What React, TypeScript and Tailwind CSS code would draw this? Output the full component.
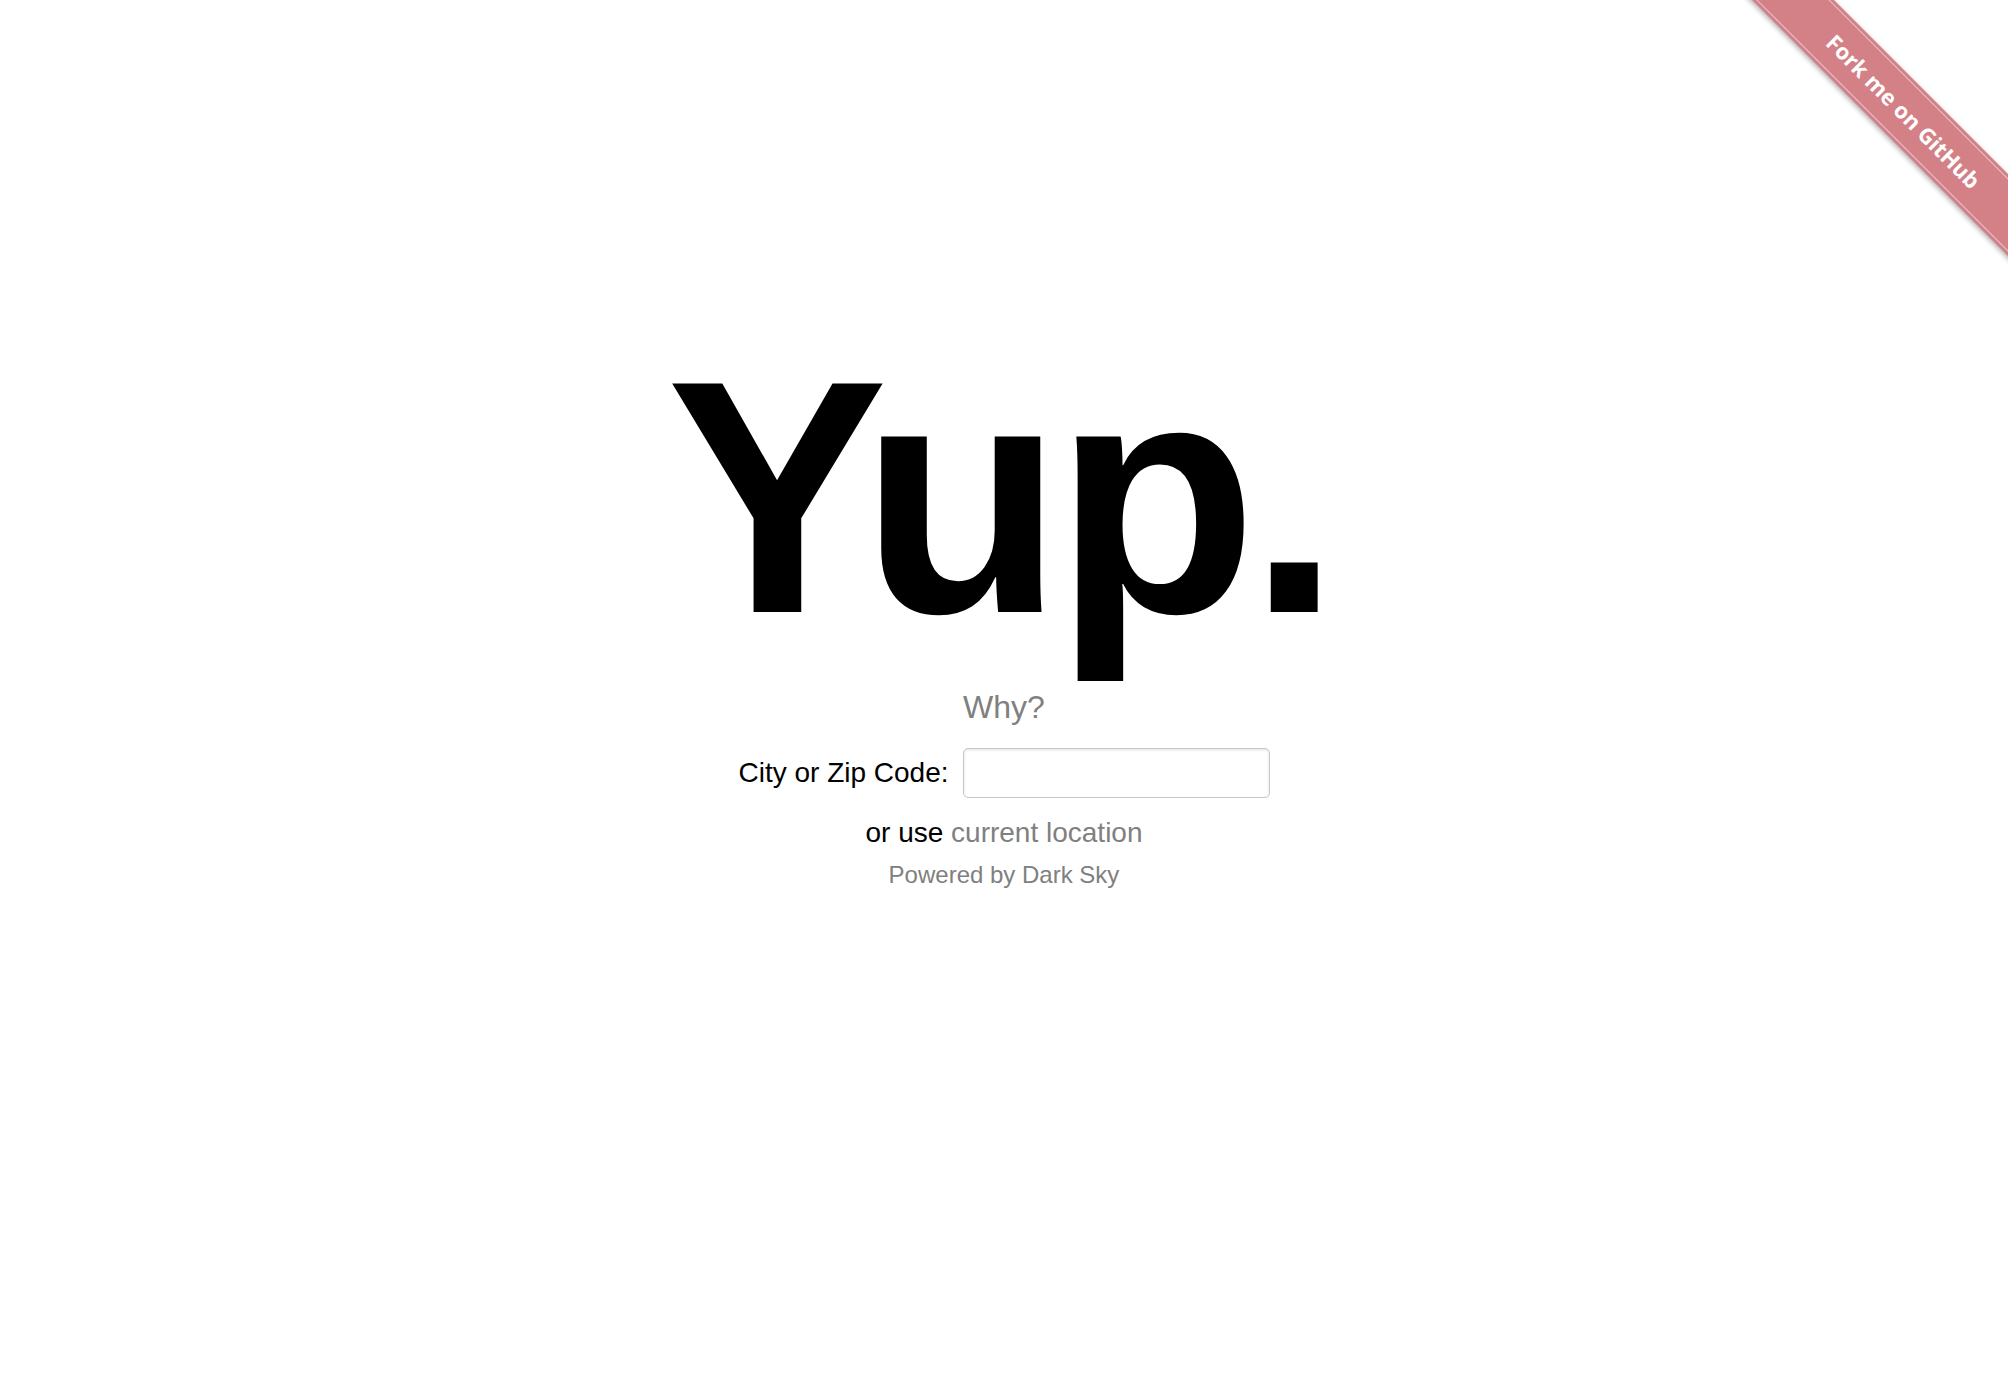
import React from "react";

export default function App() {
  return (
    <div className="relative w-full min-h-[1374px] bg-white overflow-hidden" style={{ fontFamily: '"Liberation Sans", Arial, sans-serif' }}>
      <main className="flex flex-col items-center pt-[331px]">
        <h1 className="mr-[10px] text-[332px] leading-[332px] h-[332px] font-bold text-black tracking-[-9px]">Yup.</h1>
        <a className="mt-[25px] text-[32px] leading-[38px] text-[#808080]">Why?</a>
        <div className="mt-[22px] flex items-center gap-[14px]">
          <label className="text-[28px] leading-[34px] text-black">City or Zip Code:</label>
          <input
            type="text"
            className="w-[307px] h-[50px] rounded-[5px] border border-[#c8c8c8] bg-white shadow-[inset_0_1px_3px_rgba(0,0,0,0.12)] outline-none px-3 text-[26px]"
          />
        </div>
        <p className="mt-[18px] text-[28px] leading-[34px] text-black">
          or use <a className="text-[#808080]">current location</a>
        </p>
        <p className="mt-[10px] text-[24px] leading-[30px] text-[#808080]">Powered by Dark Sky</p>
      </main>

      <div className="absolute top-0 right-0 w-[320px] h-[320px] overflow-hidden pointer-events-none">
        <div className="absolute left-[-34px] top-[82px] w-[500px] h-[58px] rotate-45 bg-[#d38187] shadow-[0_2px_5px_rgba(0,0,0,0.3)]">
          <div className="absolute inset-x-0 top-[3px] bottom-[3px] border-y border-white/50" />
          <div
            className="relative flex h-full items-center justify-center text-white text-[22px] font-bold"
            style={{ fontFamily: '"Open Sans", "DejaVu Sans", sans-serif' }}
          >
            Fork me on GitHub
          </div>
        </div>
      </div>
    </div>
  );
}
